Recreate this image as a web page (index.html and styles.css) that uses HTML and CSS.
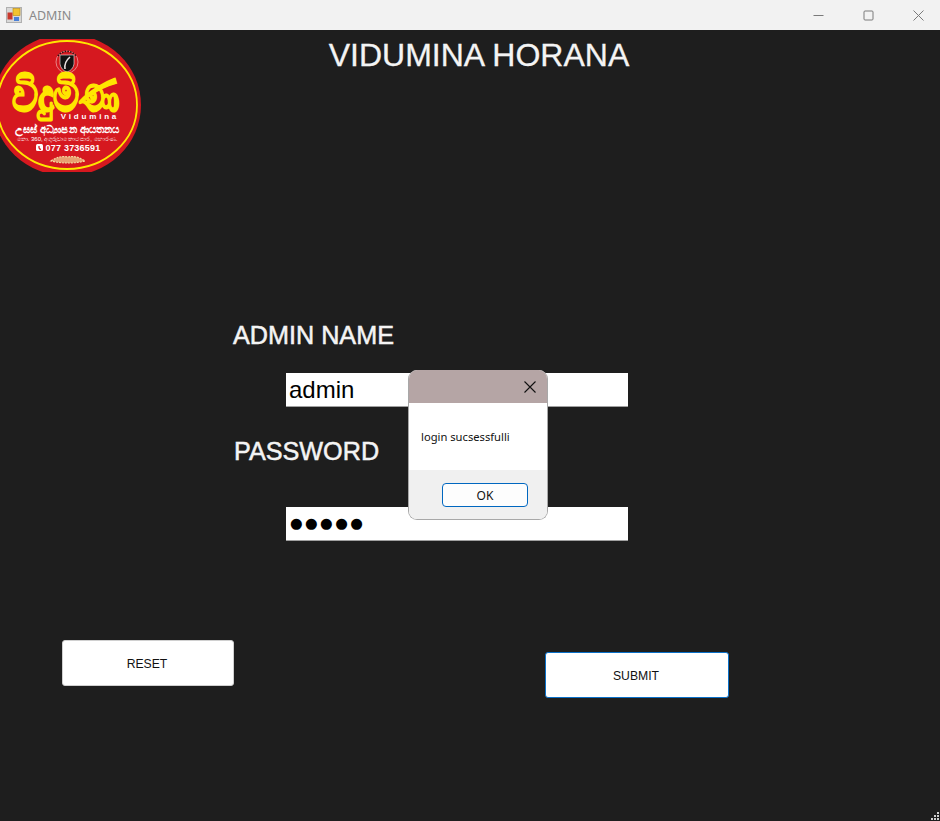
FILE: index.html
```html
<!doctype html>
<html lang="en">
<head>
  <meta charset="utf-8">
  <title>ADMIN</title>
  <link rel="stylesheet" href="styles.css">
</head>
<body>
	<div class="window">
		<div class="titlebar">
			<svg class="appIcon" width="16" height="16" viewBox="0 0 16 16">
				<rect x="0.5" y="0.5" width="15" height="15" fill="#d8d8d8" stroke="#b0b0b0"/>
				<rect x="7" y="1.5" width="7" height="7" fill="#f2c230" stroke="#b98a10" stroke-width="0.6"/>
				<rect x="1.5" y="5.5" width="5" height="7" fill="#c8382c"/>
				<rect x="8" y="10" width="5" height="4" fill="#4a80d8"/>
			</svg>
			<span class="titleText">ADMIN</span>
			<div class="winButtons">
				<svg width="11" height="11" viewBox="0 0 11 11"><path d="M0.5 5.5H10.5" stroke="#7a7a7a" fill="none"/></svg>
				<svg width="11" height="11" viewBox="0 0 11 11"><rect x="1" y="1" width="9" height="9" rx="1" stroke="#7a7a7a" fill="none"/></svg>
				<svg width="11" height="11" viewBox="0 0 11 11"><path d="M0.5 0.5L10.5 10.5M10.5 0.5L0.5 10.5" stroke="#7a7a7a" fill="none"/></svg>
			</div>
		</div>

		<div class="form">
			<svg class="logo" width="150" height="133" viewBox="0 0 150 133">
				<ellipse cx="67" cy="66" rx="74" ry="71" fill="#d6181f"/>
				<ellipse cx="67" cy="66" rx="70" ry="64" fill="none" stroke="#ffe600" stroke-width="1.8"/>
				<circle cx="67" cy="23" r="11" fill="none" stroke="#eaa0a0" stroke-width="0.8"/>
				<path d="M58 17A11 11 0 0 1 76 17" fill="none" stroke="#2a1010" stroke-width="1.600" stroke-dasharray="1.500 1.200"/>
				<path d="M60 16H74V25Q73 31 67 33Q61 31 60 25Z" fill="#111" stroke="#eee" stroke-width="0.6"/>
				<path d="M70 18Q64 23 65 30" fill="none" stroke="#e8e0e0" stroke-width="1.600"/>
				<text class="logoBig" x="66" y="72" text-anchor="middle" textLength="108" lengthAdjust="spacingAndGlyphs">විදුමිණ</text>
				<text class="logoName" x="90" y="80" text-anchor="middle">Vidumina</text>
				<text class="logoSub" x="67" y="94" text-anchor="middle" textLength="105" lengthAdjust="spacingAndGlyphs">උසස් අධ්‍යාපන ආයතනය</text>
				<text class="logoAddr" x="67" y="101.500" text-anchor="middle" textLength="101" lengthAdjust="spacingAndGlyphs">නො. 360, අගුරුවාතොට පාර, හොරණ.</text>
				<text class="logoPhone" x="73" y="112" text-anchor="middle">077 3736591</text>
				<rect x="36" y="105" width="7" height="7" rx="1.500" fill="#fff"/>
				<path d="M39 107Q38.500 110 41 110.500" fill="none" stroke="#d6181f" stroke-width="1.200"/>
				<path d="M51 122Q60 116 68 118Q76 116 85 122Q68 126 51 122Z" fill="#e8a070" stroke="#f3d9a0" stroke-width="1.200" stroke-dasharray="2 1"/>
			</svg>

			<h1 class="heading">VIDUMINA HORANA</h1>

			<label class="fieldLabel nameLabel">ADMIN NAME</label>
			<div class="textBox">admin</div>

			<label class="fieldLabel passLabel">PASSWORD</label>
			<div class="textBox passBox">●●●●●</div>

			<div class="buttons">
				<button class="formButton resetButton">RESET</button>
				<button class="formButton submitButton">SUBMIT</button>
			</div>

			<svg class="grip" width="9" height="9" viewBox="0 0 9 9" fill="#cfcfcf">
				<rect x="6" y="0" width="2" height="2"/>
				<rect x="3" y="3" width="2" height="2"/>
				<rect x="6" y="3" width="2" height="2"/>
				<rect x="0" y="6" width="2" height="2"/>
				<rect x="3" y="6" width="2" height="2"/>
				<rect x="6" y="6" width="2" height="2"/>
			</svg>
		</div>

		<div class="dialog">
			<div class="dialogHead">
				<svg width="12" height="12" viewBox="0 0 12 12"><path d="M0.5 0.5L11.500 11.500M11.500 0.5L0.5 11.500" stroke="#111" stroke-width="1.100" fill="none"/></svg>
			</div>
			<div class="dialogBody">login sucsessfulli</div>
			<div class="dialogFoot"><button class="okButton">OK</button></div>
		</div>
	</div>
</body>
</html>
```
FILE: styles.css
```css
html, body {
	margin			: 0;
	padding			: 0;
}

.window {
	position		: relative;
	width			: 940px;
	height			: 821px;
	overflow		: hidden;
	background		: #1e1e1e;
	font-family		: "Liberation Sans", Arial, sans-serif;
}

.titlebar {
	display			: flex;
	align-items		: center;
	height			: 30px;
	padding-left	: 6px;
	background		: #f2f2f2;
}

.appIcon {
	margin-right	: 7px;
}

.titleText {
	color			: #8a8a8a;
	font-family		: "Noto Sans", sans-serif;
	font-size		: 12.500px;
}

.winButtons {
	display			: flex;
	gap				: 39px;
	margin-left		: auto;
	padding-right	: 16px;
}

.form {
	display			: flex;
	flex-direction	: column;
	position		: relative;
	height			: 791px;
}

.logo {
	position		: absolute;
	left			: 0;
	top				: 9px;
	width			: 150px;
	height			: 133px;
}

.logoBig {
	fill			: #ffe600;
	stroke			: #ffe600;
	stroke-width	: 1.500px;
	font-family		: "Noto Sans", "DejaVu Sans", sans-serif;
	font-size		: 46px;
	font-weight		: 700;
}

.logoName {
	fill			: #fff;
	font-size		: 8px;
	font-weight		: 700;
	letter-spacing	: 2.800px;
}

.logoSub {
	fill			: #fff;
	font-size		: 10px;
	font-weight		: 700;
}

.logoAddr {
	fill			: #fff;
	font-size		: 6px;
}

.logoPhone {
	fill			: #fff;
	font-size		: 9px;
	font-weight		: 700;
	letter-spacing	: 0.2px;
}

.heading {
	margin			: 7px 0 0 0;
	height			: 36px;
	padding-left	: 18px;
	color			: #f4f4f4;
	font-size		: 32px;
	font-weight		: 400;
	line-height		: 36px;
	text-align		: center;
	-webkit-text-stroke: 0.3px #f4f4f4;
}

.fieldLabel {
	display			: block;
	color			: #f4f4f4;
	font-size		: 25.200px;
	font-weight		: 400;
	line-height		: 28px;
	-webkit-text-stroke: 0.5px #f4f4f4;
}

.nameLabel {
	margin			: 248px 0 0 233px;
}

.passLabel {
	margin			: 30px 0 0 234px;
}

.textBox {
	box-sizing		: border-box;
	width			: 342px;
	height			: 34px;
	margin			: 24px 0 0 286px;
	padding-left	: 3px;
	background		: #fff;
	border-bottom	: 1px solid #a0a0a0;
	color			: #000;
	font-size		: 24px;
	line-height		: 33px;
}

.passBox {
	margin-top		: 42px;
	padding-left	: 4px;
	font-family		: "DejaVu Sans", sans-serif;
	font-size		: 14.500px;
	letter-spacing	: 2.400px;
}

.buttons {
	display			: flex;
	align-items		: flex-start;
	margin-top		: 99px;
	padding-left	: 62px;
}

.formButton {
	background		: #fff;
	color			: #111;
	font-family		: "Liberation Sans", Arial, sans-serif;
	font-size		: 12.200px;
	border-radius	: 3px;
}

.resetButton {
	width			: 172px;
	height			: 46px;
	padding			: 2px 2px 0 0;
	border			: 1px solid #d0d0d0;
}

.submitButton {
	width			: 184px;
	height			: 46px;
	margin			: 12px 0 0 311px;
	padding			: 2px 2px 0 0;
	border			: 1px solid #0a70c8;
}

.grip {
	position		: absolute;
	right			: 0;
	bottom			: 0;
}

.dialog {
	position		: absolute;
	left			: 408px;
	top				: 370px;
	width			: 140px;
	height			: 150px;
	box-sizing		: border-box;
	display			: flex;
	flex-direction	: column;
	overflow		: hidden;
	border			: 1px solid #a8a8a8;
	border-top		: none;
	border-radius	: 9px;
	background		: #fff;
	font-family		: "Noto Sans", sans-serif;
}

.dialogHead {
	display			: flex;
	align-items		: center;
	justify-content	: flex-end;
	height			: 33px;
	padding-right	: 11px;
	background		: #b5a5a5;
}

.dialogBody {
	height			: 67px;
	padding-left	: 12px;
	color			: #111;
	font-size		: 11.200px;
	line-height		: 67px;
}

.dialogFoot {
	flex			: 1;
	padding			: 13px 0 0 33px;
	background		: #f0f0f0;
}

.okButton {
	display			: block;
	width			: 86px;
	height			: 24px;
	padding			: 0;
	background		: #fdfdfd;
	border			: 1px solid #0067c0;
	border-radius	: 4px;
	color			: #111;
	font-family		: "Noto Sans", sans-serif;
	font-size		: 12px;
}
```
